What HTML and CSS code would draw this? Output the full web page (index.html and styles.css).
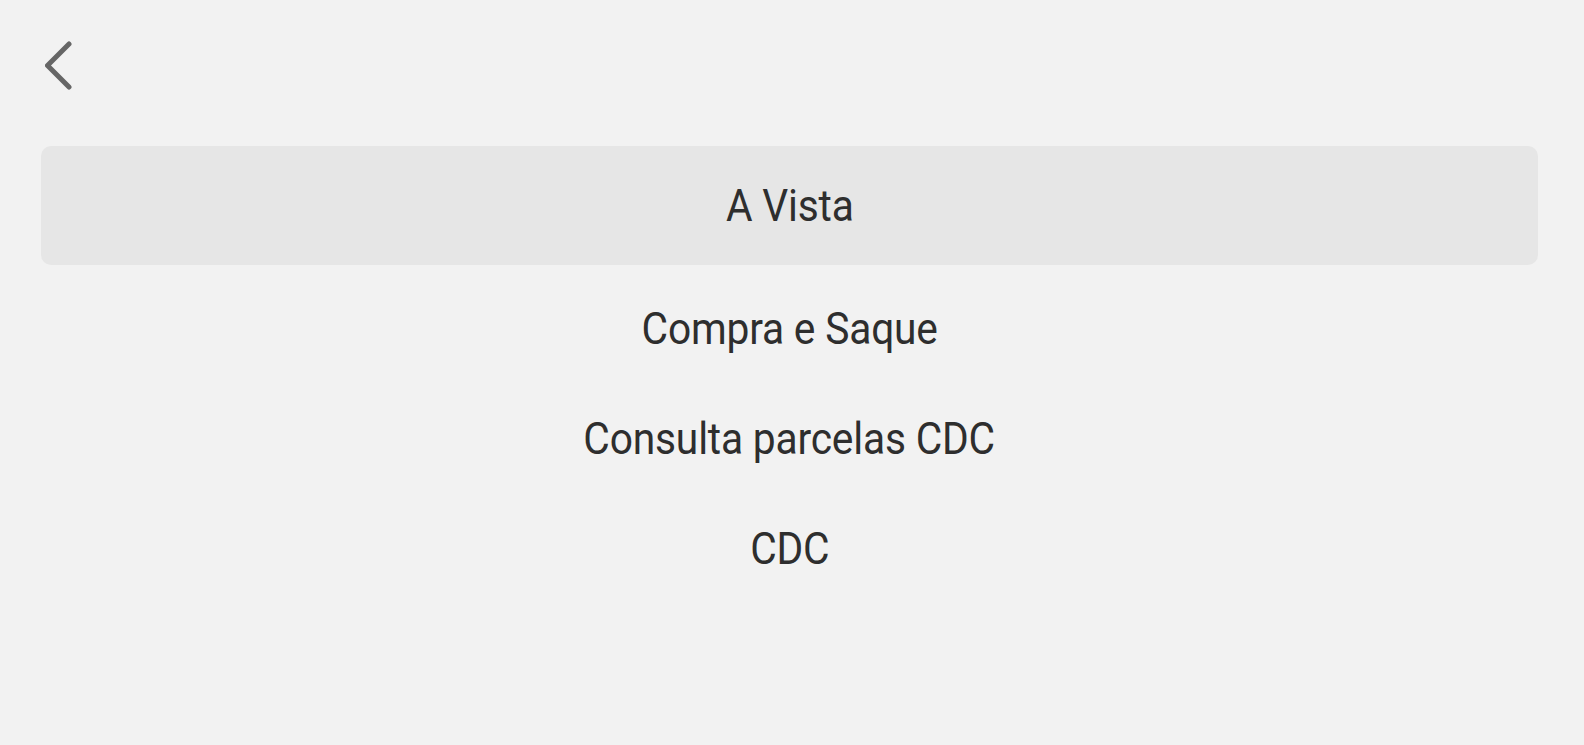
FILE: index.html
```html
<!DOCTYPE html>
<html lang="pt">
<head>
<meta charset="utf-8">
<title>Opções</title>
<link rel="stylesheet" href="styles.css">
</head>
<body>
<div class="screen">
  <header class="top-bar">
    <button class="back-btn" aria-label="Voltar">
      <svg width="32" height="52" viewBox="0 0 32 52" aria-hidden="true">
        <polyline points="24,4 2.5,25.5 24,47" fill="none" stroke="#666666" stroke-width="5" stroke-linecap="round" stroke-linejoin="round"/>
      </svg>
    </button>
  </header>
  <ul class="menu">
    <li class="menu-item selected"><span class="label">A Vista</span></li>
    <li class="menu-item"><span class="label">Compra e Saque</span></li>
    <li class="menu-item"><span class="label">Consulta parcelas CDC</span></li>
    <li class="menu-item"><span class="label">CDC</span></li>
  </ul>
</div>
</body>
</html>
```
FILE: styles.css
```css
html, body {
  margin: 0;
  padding: 0;
  background: #f2f2f2;
}
body {
  font-family: Roboto, "Noto Sans", sans-serif;
  color: #2e2e2e;
}
.screen {
  width: 1584px;
  height: 745px;
  display: flex;
  flex-direction: column;
}
.top-bar {
  height: 146px;
  display: flex;
  align-items: flex-start;
  padding-left: 45px;
  padding-top: 40px;
  box-sizing: border-box;
}
.back-btn {
  background: none;
  border: 0;
  padding: 0;
  margin: 0;
  width: 32px;
  height: 52px;
  display: block;
}
.back-btn svg {
  display: block;
}
.menu {
  list-style: none;
  margin: 0 46px 0 41px;
  padding: 0;
  display: flex;
  flex-direction: column;
}
.menu-item {
  height: 110px;
  display: flex;
  align-items: center;
  justify-content: center;
  font-size: 42px;
  letter-spacing: -0.2px;
}
.label {
  display: inline-block;
  transform: scale(0.97, 1.07);
}
.menu-item.selected {
  height: 119px;
  background: #e6e6e6;
  border-radius: 10px;
  margin-bottom: 8px;
}
```
